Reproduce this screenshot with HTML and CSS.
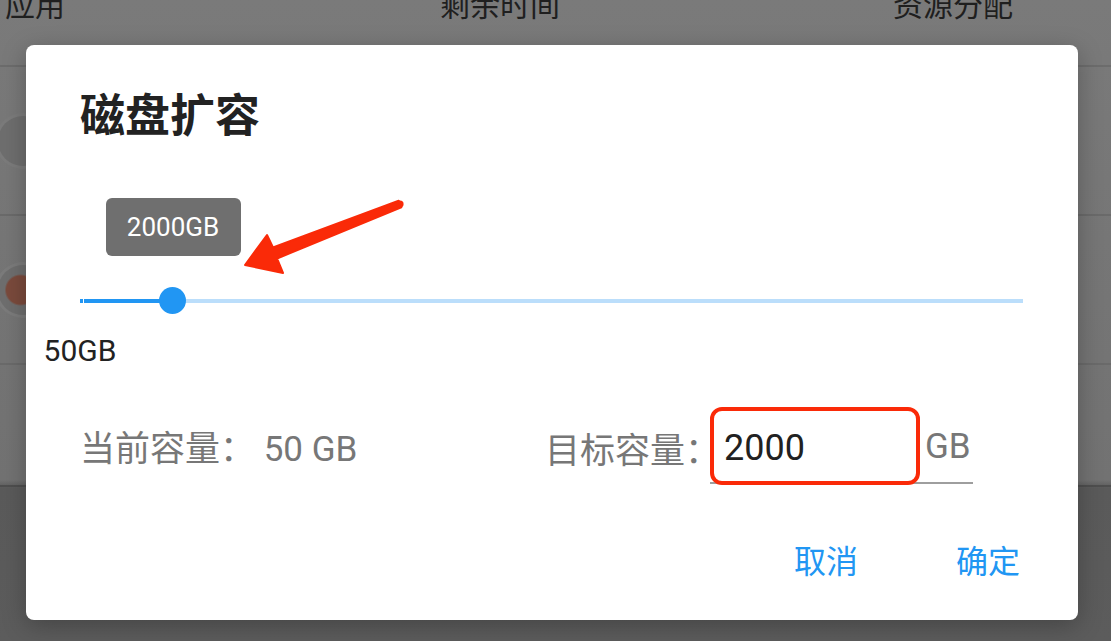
FILE: index.html
```html
<!DOCTYPE html>
<html lang="zh-CN">
<head>
  <meta charset="UTF-8" />
  <meta name="viewport" content="width=device-width, initial-scale=1.0"/>
  <title>磁盘扩容</title>
  <link rel="stylesheet" href="styles.css">
</head>
<body>

<!-- Page behind the dialog -->
<div class="page">
  <div class="table-head">
    <div>应用</div>
    <div>剩余时间</div>
    <div>资源分配</div>
  </div>
  <div class="table-row"><span class="avatar"></span></div>
  <div class="table-row"><span class="avatar avatar-red"></span></div>
  <div class="table-row short"></div>
</div>

<!-- Disk expand dialog -->
<div class="dialog">
  <div class="dialog-title">磁盘扩容</div>

  <div class="slider">
    <div class="slider-track" style="background: linear-gradient(to right, #2196f3 0 92px, #bbdefb 92px 100%);">
      <span class="slider-tick"></span>
    </div>
    <div class="slider-thumb" style="left: 92px;">
      <div class="slider-tip">2000GB</div>
    </div>
  </div>
  <div class="slider-min">50GB</div>

  <div class="info">
    <div class="info-current">当前容量： 50 GB</div>
    <div class="info-target">
      <span class="info-label">目标容量：</span>
      <div class="field">
        <div class="field-input">2000</div>
        <span class="field-unit">GB</span>
      </div>
    </div>
  </div>

  <div class="actions">
    <div class="btn">取消</div>
    <div class="btn">确定</div>
  </div>

  <!-- annotation arrow -->
  <svg class="arrow" width="1052" height="575" viewBox="26 45 1052 575">
    <polygon points="245,265 267,235 273,247.5 398.7,200.7 401.3,207.3 277,258.5 283,273" fill="#fa2a08" stroke="#fa2a08" stroke-width="2" stroke-linejoin="round"/>
    <circle cx="400" cy="204" r="3.6" fill="#fa2a08"/>
  </svg>
</div>

</body>
</html>
```

FILE: styles.css
```css
body {
  margin: 0;
  height: 641px;
  overflow: hidden;
  font-family: Roboto, "Noto Sans CJK SC", sans-serif;
  background: linear-gradient(to bottom, #7a7a7a 0, #727272 480px, #5a5a5a 488px, #5c5c5c 100%);
}

.page { color: #1f1f1f; }

.table-head {
  display: grid;
  grid-template-columns: 435px 453px 1fr;
  height: 79px;
  margin-top: -12px;
  padding: 0 0 0 5px;
  font-size: 30px;
  line-height: 36px;
  border-bottom: 2px solid #6c6c6c;
  box-sizing: border-box;
}

.table-row {
  height: 149px;
  border-bottom: 2px solid #6a6a6a;
  box-sizing: border-box;
  display: flex;
  align-items: center;
}

.table-row.short { height: 122px; border-bottom-color: #4e4e4e; }

.avatar {
  width: 50px;
  height: 50px;
  margin-left: -2px;
  border-radius: 50%;
  background: #6e6e6e;
  box-shadow: 0 0 0 3px #7b7b7b;
}

.avatar-red { background: radial-gradient(circle at 45% 50%, #7a4a3c 0 14px, #6e6e6e 16px); }

.dialog {
  position: absolute;
  left: 26px;
  top: 45px;
  width: 1052px;
  height: 575px;
  box-sizing: border-box;
  padding: 46px 55px 0 54px;
  background: #fff;
  border-radius: 8px;
  box-shadow: 0 6px 24px rgba(0, 0, 0, 0.25);
}

.dialog-title {
  font-size: 45px;
  line-height: 52px;
  font-weight: bold;
  color: #222;
}

.slider {
  position: relative;
  height: 28px;
  margin-top: 144px;
}

.slider-track {
  position: relative;
  top: 12px;
  height: 4px;
}

.slider-tick {
  position: absolute;
  left: 3px;
  top: 0;
  width: 1px;
  height: 4px;
  background: #fff;
}

.slider-thumb {
  position: absolute;
  top: 0;
  width: 27px;
  height: 27px;
  margin-left: -13px;
  border-radius: 50%;
  background: #2196f3;
}

.slider-tip {
  position: absolute;
  bottom: 58px;
  left: 50%;
  width: 135px;
  height: 58px;
  margin-left: -67px;
  border-radius: 6px;
  background: #6f6f6f;
  color: #fff;
  font-size: 26px;
  line-height: 58px;
  text-align: center;
}

.slider-min {
  display: inline-block;
  margin-top: 18px;
  transform: translateX(-50%);
  font-size: 30px;
  line-height: 36px;
  color: #222;
}

.info {
  display: flex;
  align-items: center;
  margin-top: 38px;
  font-size: 35px;
  color: #777;
}

.info-current { width: 465px; }

.info-target {
  display: flex;
  align-items: center;
}

.info-label { margin-top: 4px; }

.field {
  display: flex;
  align-items: center;
  margin-left: -10px;
  border-bottom: 2px solid #9e9e9e;
}

.field-input {
  width: 210px;
  height: 78px;
  margin-bottom: -3px;
  box-sizing: border-box;
  padding-left: 10px;
  border: 4px solid #fa2a08;
  border-radius: 12px;
  background: #fff;
  color: #212121;
  font-size: 36px;
  line-height: 74px;
}

.field-unit {
  margin-left: 5px;
  margin-top: 4px;
  padding-right: 2px;
}

.actions {
  display: flex;
  justify-content: flex-end;
  gap: 98px;
  margin-top: 54px;
  padding-right: 3px;
}

.btn {
  font-size: 32px;
  line-height: 48px;
  color: #2196f3;
  cursor: pointer;
}

.arrow {
  position: absolute;
  left: 0;
  top: 0;
  pointer-events: none;
}
```
